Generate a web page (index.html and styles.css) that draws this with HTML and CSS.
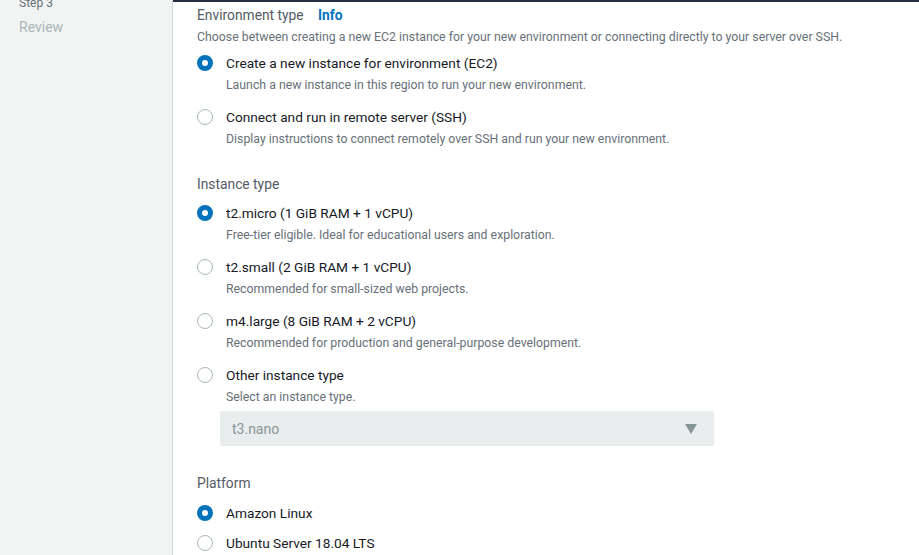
FILE: index.html
```html
<!DOCTYPE html>
<html>
<head>
<meta charset="utf-8">
<link rel="stylesheet" href="styles.css">
</head>
<body>
<div class="topbar"></div>
<div class="page">
  <aside class="sidebar">
    <div class="step">Step 3</div>
    <div class="step-name">Review</div>
  </aside>
  <main class="content">
    <section class="field">
      <div class="label">Environment type <span class="info">Info</span></div>
      <div class="desc">Choose between creating a new EC2 instance for your new environment or connecting directly to your server over SSH.</div>
      <div class="radios">
        <div class="radio checked">
          <span class="dot"></span>
          <div class="rtext">
            <div class="rlabel">Create a new instance for environment (EC2)</div>
            <div class="rdesc">Launch a new instance in this region to run your new environment.</div>
          </div>
        </div>
        <div class="radio">
          <span class="dot"></span>
          <div class="rtext">
            <div class="rlabel">Connect and run in remote server (SSH)</div>
            <div class="rdesc">Display instructions to connect remotely over SSH and run your new environment.</div>
          </div>
        </div>
      </div>
    </section>
    <section class="field">
      <div class="label">Instance type</div>
      <div class="radios after-label">
        <div class="radio checked">
          <span class="dot"></span>
          <div class="rtext">
            <div class="rlabel">t2.micro (1 GiB RAM + 1 vCPU)</div>
            <div class="rdesc">Free-tier eligible. Ideal for educational users and exploration.</div>
          </div>
        </div>
        <div class="radio">
          <span class="dot"></span>
          <div class="rtext">
            <div class="rlabel">t2.small (2 GiB RAM + 1 vCPU)</div>
            <div class="rdesc">Recommended for small-sized web projects.</div>
          </div>
        </div>
        <div class="radio">
          <span class="dot"></span>
          <div class="rtext">
            <div class="rlabel">m4.large (8 GiB RAM + 2 vCPU)</div>
            <div class="rdesc">Recommended for production and general-purpose development.</div>
          </div>
        </div>
        <div class="radio">
          <span class="dot"></span>
          <div class="rtext">
            <div class="rlabel">Other instance type</div>
            <div class="rdesc">Select an instance type.</div>
            <div class="select">
              <span>t3.nano</span>
              <svg class="caret" width="12" height="10" viewBox="0 0 12 10"><path d="M0 0 H12 L6 10 Z" fill="#879596"/></svg>
            </div>
          </div>
        </div>
      </div>
    </section>
    <section class="field">
      <div class="label">Platform</div>
      <div class="radios compact">
        <div class="radio checked">
          <span class="dot"></span>
          <div class="rtext"><div class="rlabel">Amazon Linux</div></div>
        </div>
        <div class="radio">
          <span class="dot"></span>
          <div class="rtext"><div class="rlabel">Ubuntu Server 18.04 LTS</div></div>
        </div>
      </div>
    </section>
  </main>
</div>
</body>
</html>
```

FILE: styles.css
```css
* { box-sizing: border-box; }
html, body { margin: 0; padding: 0; }
body {
  width: 919px;
  height: 555px;
  overflow: hidden;
  background: #ffffff;
  font-family: Roboto, "Open Sans", "Liberation Sans", sans-serif;
  font-size: 14px;
  color: #16191f;
}
.topbar {
  height: 2px;
  background: #232f3e;
}
.page {
  display: flex;
  height: 553px;
}
.sidebar {
  width: 173px;
  flex: none;
  background: #f2f3f3;
  border-right: 1px solid #d5dbdb;
  padding: 0 0 0 19px;
  margin-top: -7px;
}
.step {
  font-size: 12px;
  line-height: 16px;
  color: #687078;
}
.step-name {
  font-size: 14px;
  line-height: 20px;
  color: #aab7b8;
  margin-top: 6px;
}
.content {
  flex: 1;
  padding: 4px 0 0 24px;
}
.field { margin-bottom: 15px; }
.label {
  font-size: 13.8px;
  line-height: 18px;
  color: #545b64;
}
.info {
  color: #0073bb;
  font-weight: bold;
  margin-left: 11px;
}
.desc {
  font-size: 12.3px;
  line-height: 16px;
  color: #687078;
  margin-top: 5px;
}
.radios {
  display: flex;
  flex-direction: column;
  margin-top: 7px;
}
.radios.after-label { margin-top: 9px; }
.radios.compact { margin-top: 10px; }
.radio {
  display: flex;
  gap: 13px;
  min-height: 54px;
}
.compact .radio { min-height: 30px; }
.dot {
  width: 16px;
  height: 16px;
  border-radius: 50%;
  border: 1px solid #aab7b8;
  margin-top: 3px;
  flex: none;
  background: #fff;
}
.radio.checked .dot {
  border: 5px solid #0073bb;
}
.rtext { flex: 1; }
.rlabel {
  font-size: 13.7px;
  line-height: 22px;
  color: #16191f;
}
.rdesc {
  font-size: 12.3px;
  line-height: 16px;
  color: #687078;
  margin-top: 3px;
}
.select {
  width: 494px;
  height: 35px;
  margin: 6px 0 13px -6px;
  background: #eaeded;
  border-radius: 2px;
  display: flex;
  align-items: center;
  justify-content: space-between;
  padding: 0 17px 0 12px;
  color: #879596;
  font-size: 14px;
}
.caret { display: block; }
```
